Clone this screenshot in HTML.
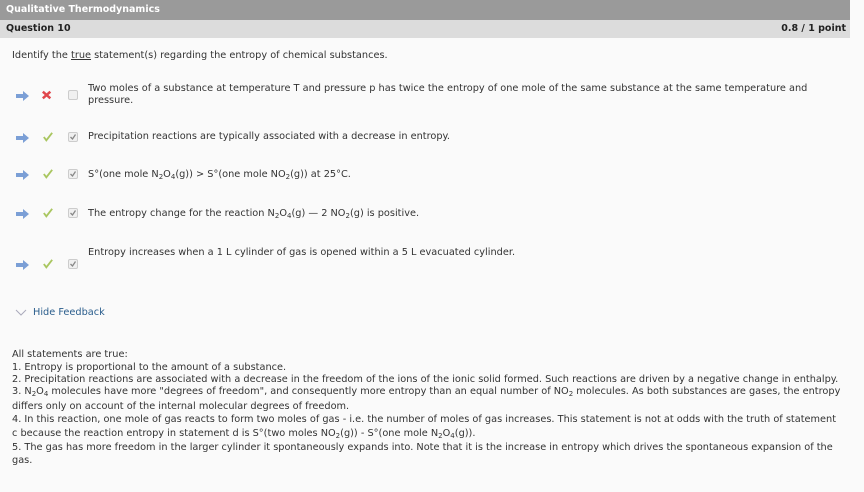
<!DOCTYPE html>
<html><head><meta charset="utf-8"><style>
body{margin:0;width:864px;height:492px;background:#fafafa;font-family:"DejaVu Sans","Liberation Sans",sans-serif;font-size:9.75px;color:#333;position:relative;overflow:hidden}
.a{position:absolute;white-space:nowrap;line-height:12px}
sub{font-size:7px;vertical-align:-2px;line-height:0}
.b1{position:absolute;left:0;top:0;width:850px;height:20px;background:#9a9a9a}
.b2{position:absolute;left:0;top:20px;width:850px;height:18px;background:#dcdcdc}
.ar{position:absolute;width:14px;height:10px}
.cb{position:absolute;width:8px;height:8px;border:1px solid #ccc;background:#f0f0f0;border-radius:2px}
.cb svg{position:absolute;left:0;top:0}
</style></head><body>
<div class="b1"></div><div class="b2"></div>
<div class="a" style="left:6px;top:4px;color:#fff;font-weight:bold;font-size:9.5px">Qualitative Thermodynamics</div>
<div class="a" style="left:6px;top:23px;color:#222;font-weight:bold;font-size:9.5px">Question 10</div>
<div class="a" style="right:18px;top:23px;color:#222;font-weight:bold;font-size:9.5px">0.8 / 1 point</div>
<div class="a" style="left:12px;top:50px">Identify the <u>true</u> statement(s) regarding the entropy of chemical substances.</div>

<svg class="ar" style="left:16px;top:91px" viewBox="0 0 14 10"><path d="M0 3h7V0l6 5-6 5V7H0z" fill="#7b9fd6"/></svg>
<svg class="ar" style="left:40px;top:90px" viewBox="0 0 14 12"><path d="M2 2l9 8M11 2l-9 8" stroke="#e0474c" stroke-width="3"/></svg>
<div class="cb" style="left:68px;top:90px"></div>
<div class="a" style="left:88px;top:83px">Two moles of a substance at temperature T and pressure p has twice the entropy of one mole of the same substance at the same temperature and</div>
<div class="a" style="left:88px;top:95px">pressure.</div>

<svg class="ar" style="left:16px;top:133px" viewBox="0 0 14 10"><path d="M0 3h7V0l6 5-6 5V7H0z" fill="#7b9fd6"/></svg>
<svg class="ar" style="left:41px;top:132px" viewBox="0 0 14 12"><path d="M2 6l3 4 7-9" stroke="#a9c660" stroke-width="2.2" fill="none"/></svg>
<div class="cb" style="left:68px;top:132px"><svg width="8" height="8" viewBox="0 0 8 8"><path d="M1.5 4l2 2 3-4.5" stroke="#888" stroke-width="1.3" fill="none"/></svg></div>
<div class="a" style="left:88px;top:131px">Precipitation reactions are typically associated with a decrease in entropy.</div>

<svg class="ar" style="left:16px;top:170px" viewBox="0 0 14 10"><path d="M0 3h7V0l6 5-6 5V7H0z" fill="#7b9fd6"/></svg>
<svg class="ar" style="left:41px;top:169px" viewBox="0 0 14 12"><path d="M2 6l3 4 7-9" stroke="#a9c660" stroke-width="2.2" fill="none"/></svg>
<div class="cb" style="left:68px;top:169px"><svg width="8" height="8" viewBox="0 0 8 8"><path d="M1.5 4l2 2 3-4.5" stroke="#888" stroke-width="1.3" fill="none"/></svg></div>
<div class="a" style="left:88px;top:169px">S°(one mole N<sub>2</sub>O<sub>4</sub>(g)) &gt; S°(one mole NO<sub>2</sub>(g)) at 25°C.</div>

<svg class="ar" style="left:16px;top:209px" viewBox="0 0 14 10"><path d="M0 3h7V0l6 5-6 5V7H0z" fill="#7b9fd6"/></svg>
<svg class="ar" style="left:41px;top:208px" viewBox="0 0 14 12"><path d="M2 6l3 4 7-9" stroke="#a9c660" stroke-width="2.2" fill="none"/></svg>
<div class="cb" style="left:68px;top:208px"><svg width="8" height="8" viewBox="0 0 8 8"><path d="M1.5 4l2 2 3-4.5" stroke="#888" stroke-width="1.3" fill="none"/></svg></div>
<div class="a" style="left:88px;top:208px">The entropy change for the reaction N<sub>2</sub>O<sub>4</sub>(g) — 2 NO<sub>2</sub>(g) is positive.</div>

<div class="a" style="left:88px;top:247px">Entropy increases when a 1 L cylinder of gas is opened within a 5 L evacuated cylinder.</div>
<svg class="ar" style="left:16px;top:260px" viewBox="0 0 14 10"><path d="M0 3h7V0l6 5-6 5V7H0z" fill="#7b9fd6"/></svg>
<svg class="ar" style="left:41px;top:259px" viewBox="0 0 14 12"><path d="M2 6l3 4 7-9" stroke="#a9c660" stroke-width="2.2" fill="none"/></svg>
<div class="cb" style="left:68px;top:259px"><svg width="8" height="8" viewBox="0 0 8 8"><path d="M1.5 4l2 2 3-4.5" stroke="#888" stroke-width="1.3" fill="none"/></svg></div>

<svg style="position:absolute;left:15px;top:309px" width="12" height="8" viewBox="0 0 12 8"><path d="M1 1l5 5 5-5" stroke="#aab" fill="none" stroke-width="1"/></svg>
<div class="a" style="left:33px;top:307px;color:#2a5d8c">Hide Feedback</div>

<div class="a" style="left:12px;top:349px">All statements are true:</div>
<div class="a" style="left:12px;top:362px">1. Entropy is proportional to the amount of a substance.</div>
<div class="a" style="left:12px;top:374px">2. Precipitation reactions are associated with a decrease in the freedom of the ions of the ionic solid formed. Such reactions are driven by a negative change in enthalpy.</div>
<div class="a" style="left:12px;top:386px">3. N<sub>2</sub>O<sub>4</sub> molecules have more "degrees of freedom", and consequently more entropy than an equal number of NO<sub>2</sub> molecules. As both substances are gases, the entropy</div>
<div class="a" style="left:12px;top:401px">differs only on account of the internal molecular degrees of freedom.</div>
<div class="a" style="left:12px;top:414px">4. In this reaction, one mole of gas reacts to form two moles of gas - i.e. the number of moles of gas increases. This statement is not at odds with the truth of statement</div>
<div class="a" style="left:12px;top:428px">c because the reaction entropy in statement d is S°(two moles NO<sub>2</sub>(g)) - S°(one mole N<sub>2</sub>O<sub>4</sub>(g)).</div>
<div class="a" style="left:12px;top:442px">5. The gas has more freedom in the larger cylinder it spontaneously expands into. Note that it is the increase in entropy which drives the spontaneous expansion of the</div>
<div class="a" style="left:12px;top:455px">gas.</div>
</body></html>
